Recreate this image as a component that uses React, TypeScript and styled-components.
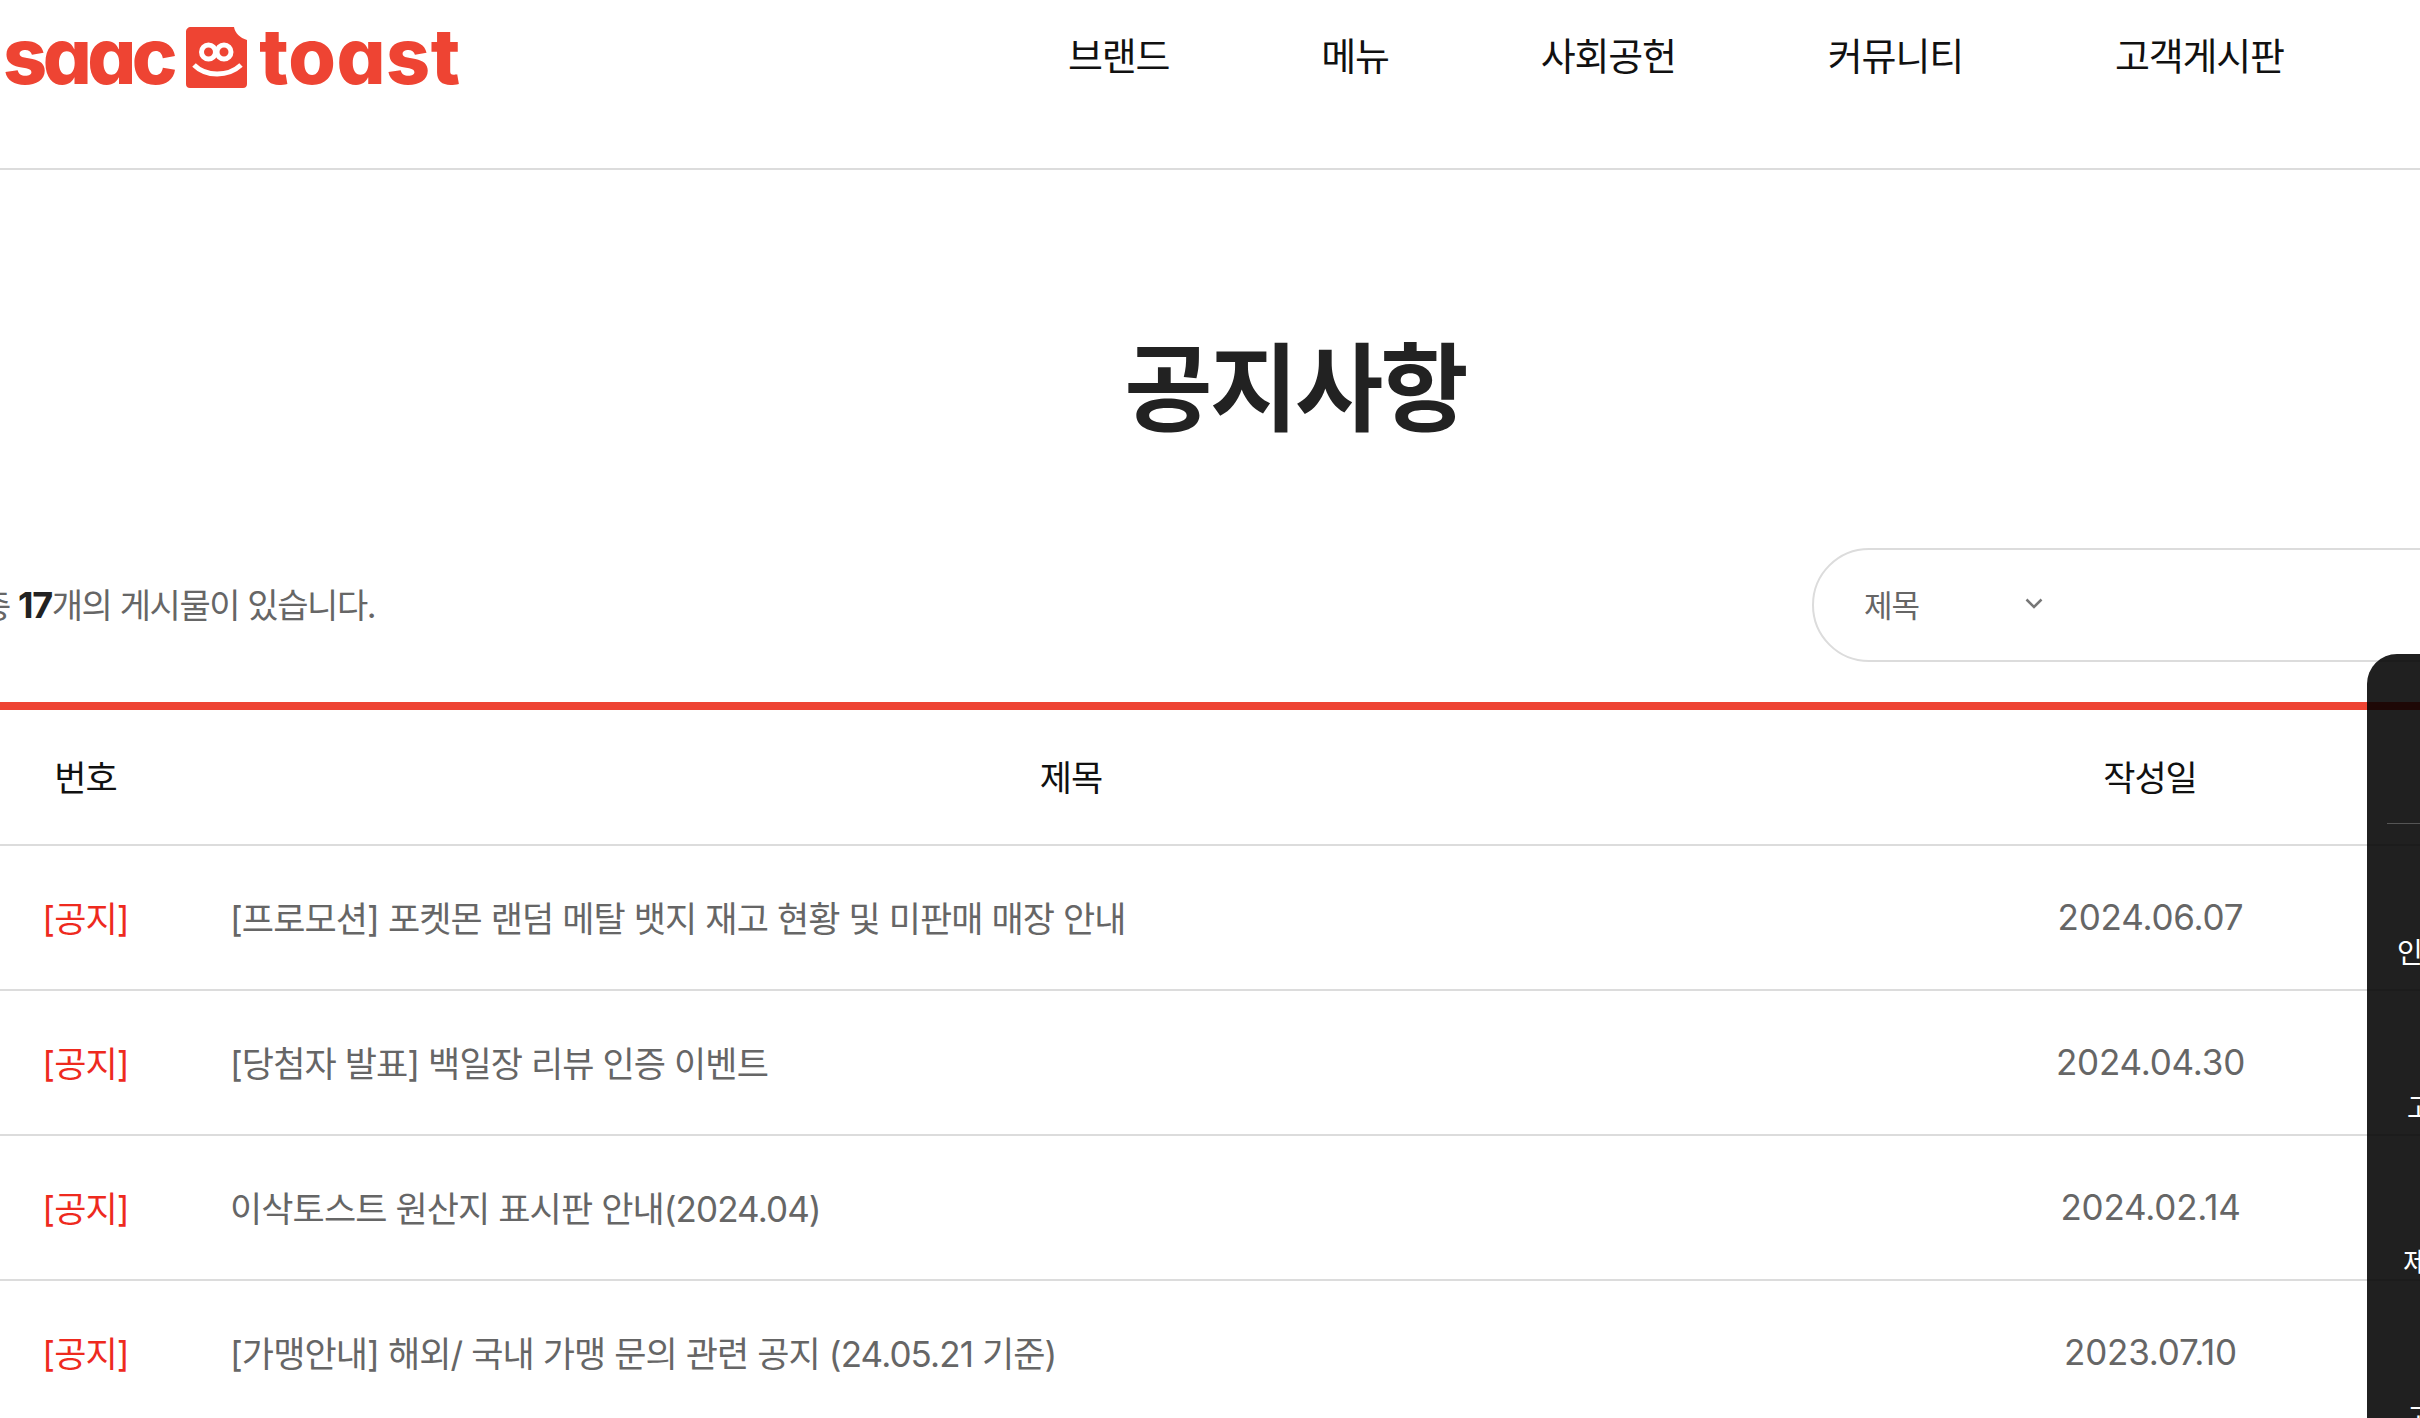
import React from "react";
import styled, { createGlobalStyle } from "styled-components";

const Global = createGlobalStyle`
  html, body { margin: 0; padding: 0; background: #fff; width: 2420px; height: 1418px; overflow: hidden; }
  body { font-family: Inter, "Noto Sans CJK KR", sans-serif; color: #222; }
  * { box-sizing: border-box; }
`;

const Page = styled.div`
  position: relative;
  width: 2420px;
  height: 1418px;
  overflow: hidden;
`;

const Header = styled.header`
  height: 170px;
  border-bottom: 2px solid #dcdcdc;
  display: flex;
  align-items: flex-start;
`;

const Logo = styled.a`
  display: flex;
  align-items: center;
  margin: 27px 0 0 3px;
  height: 61px;
  width: 1000px;
  flex: none;
  color: #ee4433;
`;

const LogoWord = styled.span<{ $spacing: number; $before: number; $after: number }>`
  font-family: Inter, sans-serif;
  font-feature-settings: "cv11" 1;
  font-weight: 800;
  font-size: 77px;
  line-height: 61px;
  letter-spacing: ${(p) => p.$spacing}px;
  margin: -2px ${(p) => p.$after}px 0 ${(p) => p.$before}px;
`;

const Nav = styled.nav`
  display: flex;
  gap: 152px;
  margin: 32px 0 0 65px;
`;

const NavItem = styled.a`
  font-size: 38px;
  line-height: 48px;
  letter-spacing: -1.2px;
  color: #111;
  font-weight: 400;
`;

const Title = styled.h1`
  margin: 160px 0 0;
  width: 2590px;
  text-align: center;
  font-size: 96px;
  line-height: 116px;
  font-weight: 700;
  letter-spacing: -3px;
  color: #222;
`;

const TopRow = styled.div`
  display: flex;
  align-items: center;
  justify-content: space-between;
  margin-top: 102px;
  height: 114px;
  width: 2520px;
`;

const Count = styled.p`
  margin: 0 0 4px -20px;
  font-size: 34px;
  letter-spacing: -1.4px;
  color: #666;
`;

const Strong = styled.strong`
  color: #222;
  font-weight: 700;
  font-size: 36px;
`;

const Search = styled.div`
  width: 708px;
  height: 114px;
  border: 2px solid #dcdcdc;
  border-radius: 57px;
  display: flex;
  align-items: center;
  padding: 0 0 4px 50px;
  gap: 106px;
  font-size: 31px;
  letter-spacing: -1px;
  color: #666;
`;

const Table = styled.div`
  margin-top: 40px;
  border-top: 8px solid #ee4433;
`;

const columns = `grid-template-columns: 171px 1800px 358px;`;

const HeadRow = styled.div`
  display: grid;
  ${columns}
  height: 136px;
  padding-bottom: 4px;
  border-bottom: 2px solid #dcdcdc;
  align-items: center;
  font-size: 35px;
  letter-spacing: -1px;
  color: #111;
`;

const Row = styled.div`
  display: grid;
  ${columns}
  height: 145px;
  padding-bottom: 2px;
  border-bottom: 2px solid #dcdcdc;
  align-items: center;
  font-size: 35px;
  letter-spacing: -0.9px;
  color: #666;
`;

const Center = styled.span`
  text-align: center;
`;

const DateCell = styled.span`
  text-align: center;
  letter-spacing: -0.2px;
  padding-left: 1px;
`;

const Notice = styled.span`
  text-align: center;
  color: #ee2a1e;
`;

const Subject = styled.a`
  padding-left: 59px;
`;

const Panel = styled.aside`
  position: absolute;
  left: 2367px;
  top: 654px;
  width: 200px;
  height: 800px;
  background: rgba(0, 0, 0, 0.875);
  border-radius: 30px 0 0 0;
  color: #fff;
  padding-top: 169px;
  font-size: 28px;
  overflow: hidden;
`;

const PanelLine = styled.div`
  height: 1px;
  margin-left: 20px;
  background: #555;
`;

const PanelItem = styled.div<{ $indent: number }>`
  height: 155px;
  padding-left: ${(p) => p.$indent}px;
  padding-top: 106px;
  line-height: 40px;
  white-space: nowrap;
`;

const PanelList = styled.div`
  margin-top: 3px;
`;

const rows = [
  ["[프로모션] 포켓몬 랜덤 메탈 뱃지 재고 현황 및 미판매 매장 안내", "2024.06.07"],
  ["[당첨자 발표] 백일장 리뷰 인증 이벤트", "2024.04.30"],
  ["이삭토스트 원산지 표시판 안내(2024.04)", "2024.02.14"],
  ["[가맹안내] 해외/ 국내 가맹 문의 관련 공지 (24.05.21 기준)", "2023.07.10"],
];

function BrandMark() {
  return (
    <svg width="61" height="61" viewBox="0 0 61 61" aria-hidden="true" style={{ flex: "none" }}>
      <path
        d="M5 0H48C49 6 54 11 61 13V57C61 59.500 59.500 61 57 61H4C1.500 61 0 59.500 0 57V5C0 2 2 0 5 0Z"
        fill="#ee4433"
      />
      <circle cx="22.500" cy="25" r="7" fill="none" stroke="#fff" strokeWidth="5" />
      <circle cx="38" cy="25" r="7" fill="none" stroke="#fff" strokeWidth="5" />
      <path d="M8 38C20 50 42 50 55 38" fill="none" stroke="#fff" strokeWidth="5" />
    </svg>
  );
}

export default function App() {
  return (
    <Page>
      <Global />
      <Header>
        <Logo>
          <LogoWord $spacing={-4.500} $before={0} $after={13}>saac</LogoWord>
          <BrandMark />
          <LogoWord $spacing={0.500} $before={12} $after={0}>toast</LogoWord>
        </Logo>
        <Nav>
          <NavItem>브랜드</NavItem>
          <NavItem>메뉴</NavItem>
          <NavItem>사회공헌</NavItem>
          <NavItem>커뮤니티</NavItem>
          <NavItem>고객게시판</NavItem>
        </Nav>
      </Header>
      <Title>공지사항</Title>
      <TopRow>
        <Count>
          총 <Strong>17</Strong>개의 게시물이 있습니다.
        </Count>
        <Search>
          <span>제목</span>
          <svg width="18" height="11" viewBox="0 0 18 11" aria-hidden="true">
            <path d="M1.500 1.500L9 9L16.500 1.500" fill="none" stroke="#777" strokeWidth="2.500" />
          </svg>
        </Search>
      </TopRow>
      <Table>
        <HeadRow>
          <Center>번호</Center>
          <Center>제목</Center>
          <Center>작성일</Center>
        </HeadRow>
        {rows.map(([subject, date]) => (
          <Row key={date}>
            <Notice>[공지]</Notice>
            <Subject>{subject}</Subject>
            <DateCell>{date}</DateCell>
          </Row>
        ))}
      </Table>
      <Panel>
        <PanelLine />
        <PanelList>
          <PanelItem $indent={30}>인기</PanelItem>
          <PanelItem $indent={40}>고객</PanelItem>
          <PanelItem $indent={36}>제안</PanelItem>
          <PanelItem $indent={40}>고객</PanelItem>
        </PanelList>
      </Panel>
    </Page>
  );
}
